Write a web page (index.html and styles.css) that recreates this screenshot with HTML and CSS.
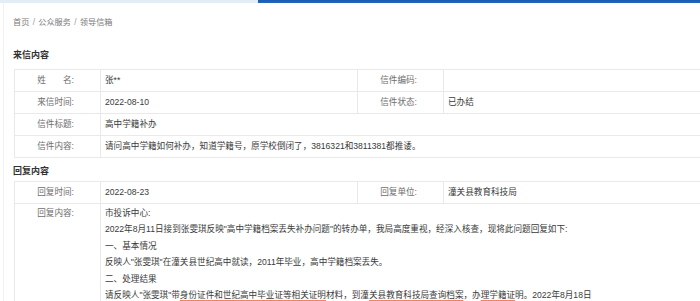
FILE: index.html
```html
<!DOCTYPE html>
<html lang="zh-CN">
<head>
<meta charset="utf-8">
<title>领导信箱</title>
<link rel="stylesheet" href="styles.css">
</head>
<body>
<div class="topbar"><div class="topbar-light"></div><div class="topbar-blue"></div></div>
<div class="page">
  <div class="crumb">首页 <span class="sep">/</span> 公众服务 <span class="sep">/</span> 领导信箱</div>

  <h2 class="sec-title sec-first">来信内容</h2>
  <table class="info info-first">
    <colgroup><col class="c-label"><col class="c-val"><col class="c-label"><col class="c-val2"></colgroup>
    <tr>
      <td class="label">姓　　名:</td><td>张**</td>
      <td class="label">信件编码:</td><td></td>
    </tr>
    <tr>
      <td class="label">来信时间:</td><td>2022-08-10</td>
      <td class="label">信件状态:</td><td>已办结</td>
    </tr>
    <tr>
      <td class="label">信件标题:</td><td colspan="3">高中学籍补办</td>
    </tr>
    <tr>
      <td class="label">信件内容:</td><td colspan="3">请问高中学籍如何补办，知道学籍号，原学校倒闭了，3816321和3811381都推诿。</td>
    </tr>
  </table>

  <h2 class="sec-title sec-second">回复内容</h2>
  <table class="info info-second">
    <colgroup><col class="c-label"><col class="c-val"><col class="c-label"><col class="c-val2"></colgroup>
    <tr>
      <td class="label">回复时间:</td><td>2022-08-23</td>
      <td class="label">回复单位:</td><td>潼关县教育科技局</td>
    </tr>
    <tr>
      <td class="label label-top">回复内容:</td>
      <td colspan="3" class="reply">
        <div>市投诉中心:</div>
        <div>2022年8月11日接到张雯琪反映"高中学籍档案丢失补办问题"的转办单，我局高度重视，经深入核查，现将此问题回复如下:</div>
        <div>一、基本情况</div>
        <div>反映人"张雯琪"在潼关县世纪高中就读，2011年毕业，高中学籍档案丢失。</div>
        <div>二、处理结果</div>
        <div>请反映人"张雯琪"带<span class="mark">身份证件和世纪高中毕业证等相关证明</span>材料，到潼<span class="mark">关县教育科技局查询档案</span>，办<span class="mark">理学籍证</span>明。2022年8月18日</div>
      </td>
    </tr>
  </table>
</div>
</body>
</html>
```

FILE: styles.css
```css
html, body {
  margin: 0;
  padding: 0;
  background: #ffffff;
  overflow: hidden;
}

body {
  font-family: "Liberation Sans", "Noto Sans CJK SC", sans-serif;
  font-size: 8.6px;
  color: #3a3a3a;
  width: 700px;
  height: 301px;
}

.topbar {
  display: flex;
  height: 3px;
}

.topbar-light {
  width: 258px;
  background: #e4ecf5;
}

.topbar-blue {
  flex: 1;
  background: linear-gradient(#1a5cb3, #2366bd);
}

.page {
  margin-left: 3px;
  padding: 14px 0 0 9px;
  border-left: 1px solid #f1f1f1;
  height: 298px;
  box-sizing: border-box;
  overflow: hidden;
}

.crumb {
  line-height: 12px;
  font-size: 8.2px;
  color: #7a7a7a;
}

.crumb .sep {
  color: #999999;
  margin: 0 1px;
}

.sec-title {
  margin: 0;
  font-size: 9px;
  font-weight: bold;
  line-height: 14px;
  color: #333333;
}

.sec-first {
  margin-top: 19px;
}

.sec-second {
  margin-top: 6px;
}

.info {
  border-collapse: collapse;
  table-layout: fixed;
  width: 687px;
  margin-left: 1px;
}

.info-first {
  margin-top: 7px;
}

.info-second {
  margin-top: 3px;
}

.c-label {
  width: 86px;
}

.c-val {
  width: 257px;
}

.info td {
  border: 1px solid #e9e9e9;
  padding: 0 4px;
  line-height: 21px;
  height: 21px;
  color: #3a3a3a;
  white-space: nowrap;
  overflow: hidden;
  vertical-align: middle;
}

.info td.label {
  text-align: right;
  padding-right: 26px;
  color: #6e6e6e;
}

.info td.label-top {
  vertical-align: top;
  line-height: 16.4px;
  padding-top: 1px;
}

.info td.reply {
  vertical-align: top;
  line-height: 16.4px;
  padding-top: 1px;
}

.mark {
  text-decoration: underline;
  text-decoration-color: #f2825e;
  text-decoration-thickness: 2px;
  text-underline-offset: 2px;
}
```
